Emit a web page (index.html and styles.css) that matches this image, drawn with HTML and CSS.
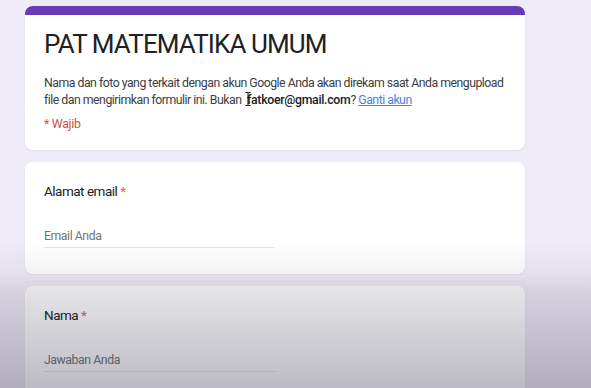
FILE: index.html
```html
<!DOCTYPE html>
<html lang="id">
<head>
    <meta charset="UTF-8">
    <meta name="viewport" content="width=device-width, initial-scale=1.0">
    <title>PAT MATEMATIKA UMUM</title>
    <link rel="stylesheet" href="styles.css">
</head>
<body>
    <div class="form-wrap">
        <div class="form-card header-card">
            <h1 class="form-title">PAT MATEMATIKA UMUM</h1>
            <p class="form-desc">Nama dan foto yang terkait dengan akun Google Anda akan direkam saat Anda mengupload file dan mengirimkan formulir ini. Bukan <span class="email"><svg class="ibeam" width="6" height="14" viewBox="0 0 6 14"><path d="M0.5 0.5h2l0.5 0.6 0.5-0.6h2M3 1.1v11.8M0.5 13.5h2l0.5-0.6 0.5 0.6h2" fill="none" stroke="#000" stroke-width="1"/></svg>fatkoer@gmail.com</span>? <a href="#" class="switch">Ganti akun</a></p>
            <div class="required-note">* Wajib</div>
        </div>

        <div class="form-card question">
            <div class="q-label">Alamat email <span class="star">*</span></div>
            <div class="q-input">Email Anda</div>
        </div>

        <div class="form-card question cut-off">
            <div class="q-label">Nama <span class="star">*</span></div>
            <div class="q-input">Jawaban Anda</div>
        </div>
    </div>

    <div class="shade"></div>
</body>
</html>
```

FILE: styles.css
```css
* {
    margin: 0;
    padding: 0;
    box-sizing: border-box;
}

body {
    background: #f0ebf8;
    font-family: Roboto, "Liberation Sans", sans-serif;
    color: #202124;
    padding-top: 6px;
    overflow: hidden;
    height: 388px;
}

.form-wrap {
    width: 500px;
    margin-left: 25px;
}

.form-card {
    background: #fff;
    border-radius: 8px;
    margin-bottom: 12px;
    padding: 0 10px 0 19px;
    box-shadow: 0 1px 2px rgba(60, 64, 67, 0.08);
}

.header-card {
    border-top: 9px solid #673ab7;
    padding-top: 11px;
    height: 144px;
}

.form-title {
    font-family: Roboto, sans-serif;
    font-weight: 400;
    font-size: 26px;
    line-height: 36px;
    letter-spacing: -0.9px;
    color: #202124;
}

.form-desc {
    margin-top: 13px;
    font-size: 12.3px;
    line-height: 17px;
    letter-spacing: -0.5px;
    color: #3c4043;
}

.email {
    font-weight: 500;
    letter-spacing: -0.3px;
    color: #202124;
    position: relative;
    margin-left: 3px;
}

.ibeam {
    position: absolute;
    left: -2px;
    top: -1px;
}

.switch {
    color: #4a7fe0;
    text-decoration: underline;
}

.required-note {
    margin-top: 7px;
    font-size: 12.3px;
    line-height: 17px;
    letter-spacing: -0.3px;
    color: #c9543b;
}

.question {
    height: 112px;
    padding-top: 20px;
}

/* last card runs off the bottom of the frame */
.question.cut-off {
    height: 102px;
    margin-bottom: 0;
    border-bottom-left-radius: 0;
    border-bottom-right-radius: 0;
}

.q-label {
    font-size: 13.5px;
    line-height: 18px;
    letter-spacing: -0.5px;
    color: #202124;
}

.star {
    color: #d06b5a;
}

.q-input {
    margin-top: 28px;
    width: 231px;
    font-size: 12.3px;
    line-height: 17px;
    letter-spacing: -0.45px;
    color: #70757a;
    padding-bottom: 2px;
    border-bottom: 1px solid #e6e6e6;
}

.shade {
    position: fixed;
    inset: 0;
    pointer-events: none;
    background: linear-gradient(to bottom,
        rgba(40, 36, 60, 0) 0px,
        rgba(40, 36, 60, 0) 240px,
        rgba(40, 36, 60, 0.05) 272px,
        rgba(40, 36, 60, 0.13) 292px,
        rgba(40, 36, 60, 0.22) 340px,
        rgba(40, 36, 60, 0.31) 388px);
}
```
